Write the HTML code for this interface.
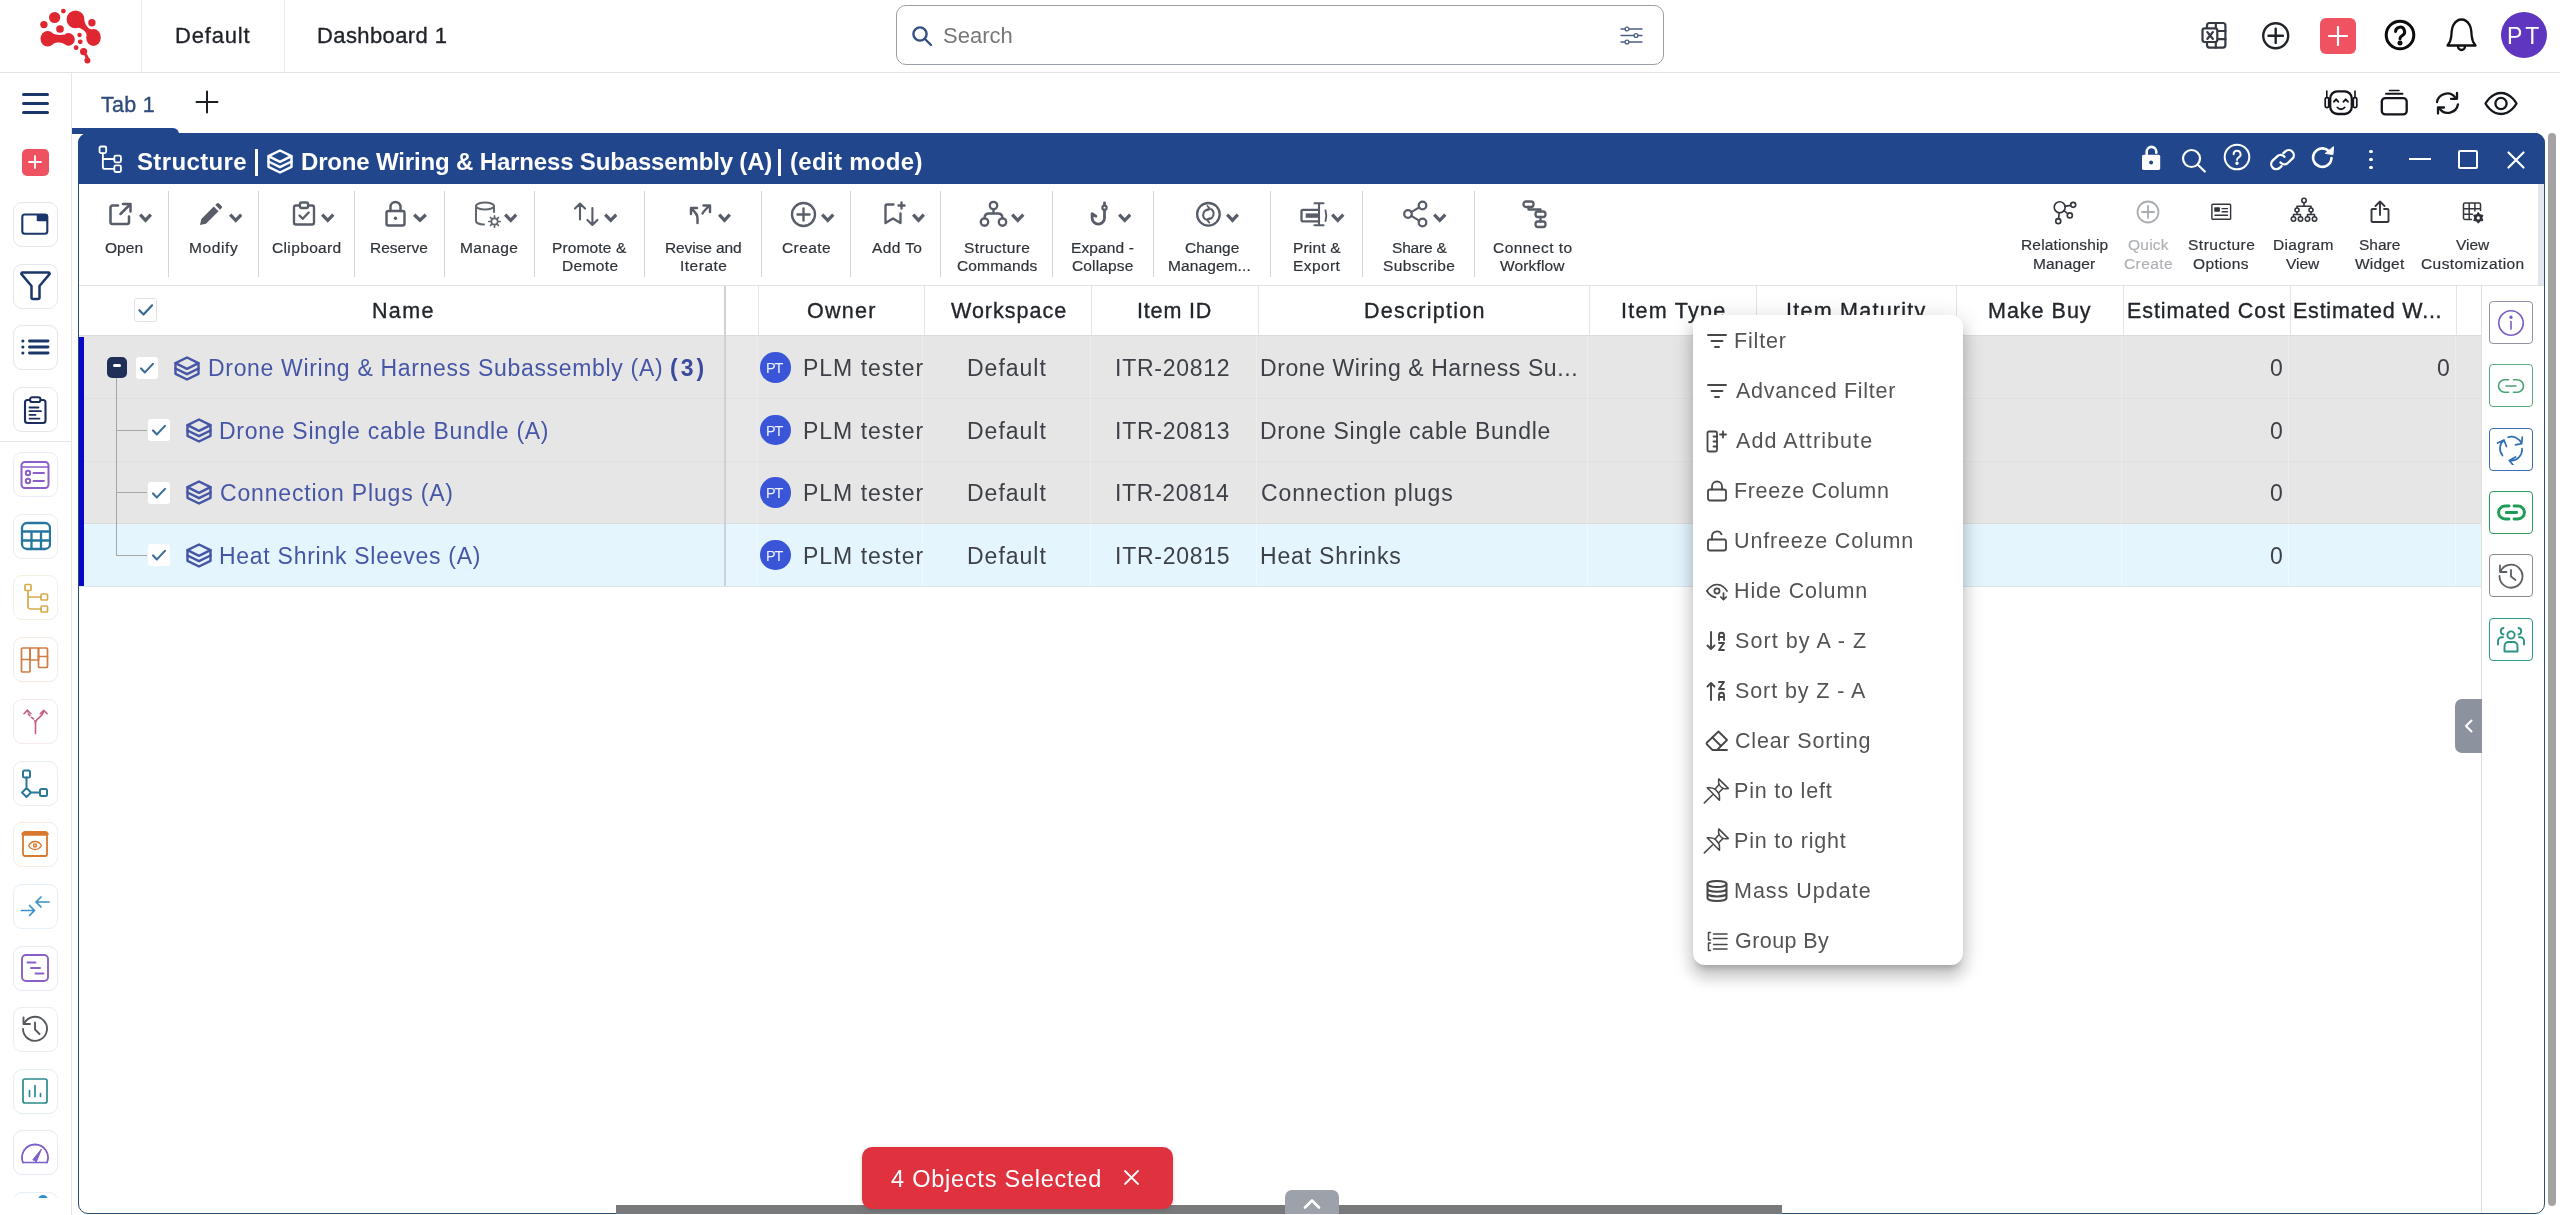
<!DOCTYPE html>
<html lang="en"><head><meta charset="utf-8"><title>Structure - Drone Wiring &amp; Harness Subassembly</title><style>
*{margin:0;padding:0;box-sizing:border-box}
html,body{width:2560px;height:1215px;overflow:hidden;background:#fff}
body{position:relative;font-family:"Liberation Sans", sans-serif;}
div,svg,span.t{position:absolute}
span.t{white-space:nowrap;display:block;will-change:transform}
</style></head>
<body>
<div style="left:0px;top:72px;width:2560px;height:1px;background:#e3e3e3"></div>
<div style="left:141px;top:0px;width:1px;height:72px;background:#ececec"></div>
<div style="left:284px;top:0px;width:1px;height:72px;background:#ececec"></div>
<span class="t" style="left:175.00px;top:24.8px;font-size:22px;line-height:22px;color:#1f2328;-webkit-text-stroke:0.35px;letter-spacing:0.817px;">Default</span>
<span class="t" style="left:317.00px;top:24.8px;font-size:22px;line-height:22px;color:#1f2328;-webkit-text-stroke:0.35px;letter-spacing:0.400px;">Dashboard 1</span>
<div style="left:896px;top:5px;width:768px;height:60px;border:1px solid #9aa0a8;border-radius:10px;background:#fff"></div>
<span class="t" style="left:943.00px;top:24.8px;font-size:22px;line-height:22px;color:#777;letter-spacing:0.000px;">Search</span>
<div style="left:71px;top:73px;width:1px;height:1142px;background:#e6e6e6"></div>
<div style="left:0px;top:441px;width:71px;height:1px;background:#e6e6e6"></div>
<div style="left:21.5px;top:92.8px;width:27.5px;height:3.4px;background:#1b3769;border-radius:1.700px"></div>
<div style="left:21.5px;top:101.8px;width:27.5px;height:3.4px;background:#1b3769;border-radius:1.700px"></div>
<div style="left:21.5px;top:110.8px;width:27.5px;height:3.4px;background:#1b3769;border-radius:1.700px"></div>
<span class="t" style="left:101.00px;top:95.0px;font-size:21.5px;line-height:21.5px;color:#2f4a7c;-webkit-text-stroke:0.35px;letter-spacing:0.250px;">Tab 1</span>
<div style="left:72px;top:128px;width:107px;height:6px;background:#21468b;border-radius:0 6px 0 0"></div>
<div style="left:78px;top:133px;width:2467px;height:1081px;border:1px solid #2c4e6e;border-radius:10px 10px 10px 10px;background:#fff"></div>
<div style="left:78px;top:133px;width:2467px;height:51px;background:#21468b;border-radius:10px 10px 0 0"></div>
<span class="t" style="left:137.00px;top:149.9px;font-size:24px;line-height:24px;color:#fff;font-weight:700;letter-spacing:0.362px;">Structure</span>
<div style="left:255px;top:149px;width:3px;height:27px;background:#fff"></div>
<span class="t" style="left:300.50px;top:149.9px;font-size:24px;line-height:24px;color:#fff;font-weight:700;letter-spacing:-0.159px;">Drone Wiring &amp; Harness Subassembly (A)</span>
<div style="left:778px;top:149px;width:3px;height:27px;background:#fff"></div>
<span class="t" style="left:790.00px;top:149.9px;font-size:24px;line-height:24px;color:#fff;font-weight:700;letter-spacing:0.310px;">(edit mode)</span>
<div style="left:168px;top:191px;width:1px;height:86px;background:#d3d5d7"></div>
<div style="left:258px;top:191px;width:1px;height:86px;background:#d3d5d7"></div>
<div style="left:354px;top:191px;width:1px;height:86px;background:#d3d5d7"></div>
<div style="left:444px;top:191px;width:1px;height:86px;background:#d3d5d7"></div>
<div style="left:534px;top:191px;width:1px;height:86px;background:#d3d5d7"></div>
<div style="left:644px;top:191px;width:1px;height:86px;background:#d3d5d7"></div>
<div style="left:761px;top:191px;width:1px;height:86px;background:#d3d5d7"></div>
<div style="left:850px;top:191px;width:1px;height:86px;background:#d3d5d7"></div>
<div style="left:940px;top:191px;width:1px;height:86px;background:#d3d5d7"></div>
<div style="left:1052px;top:191px;width:1px;height:86px;background:#d3d5d7"></div>
<div style="left:1153px;top:191px;width:1px;height:86px;background:#d3d5d7"></div>
<div style="left:1270px;top:191px;width:1px;height:86px;background:#d3d5d7"></div>
<div style="left:1362px;top:191px;width:1px;height:86px;background:#d3d5d7"></div>
<div style="left:1474px;top:191px;width:1px;height:86px;background:#d3d5d7"></div>
<div style="left:79px;top:285px;width:2465px;height:1px;background:#e2e2e2"></div>
<div style="left:2538px;top:184px;width:6px;height:101px;background:#e3e7ee"></div>
<span class="t" style="left:105.00px;top:240.4px;font-size:15.5px;line-height:15.5px;color:#2e3338;-webkit-text-stroke:0.2px;letter-spacing:0.033px;">Open</span>
<span class="t" style="left:189.00px;top:240.4px;font-size:15.5px;line-height:15.5px;color:#2e3338;-webkit-text-stroke:0.2px;letter-spacing:0.600px;">Modify</span>
<span class="t" style="left:272.00px;top:240.4px;font-size:15.5px;line-height:15.5px;color:#2e3338;-webkit-text-stroke:0.2px;letter-spacing:0.362px;">Clipboard</span>
<span class="t" style="left:370.00px;top:240.4px;font-size:15.5px;line-height:15.5px;color:#2e3338;-webkit-text-stroke:0.2px;letter-spacing:0.017px;">Reserve</span>
<span class="t" style="left:460.00px;top:240.4px;font-size:15.5px;line-height:15.5px;color:#2e3338;-webkit-text-stroke:0.2px;letter-spacing:0.380px;">Manage</span>
<span class="t" style="left:552.00px;top:240.4px;font-size:15.5px;line-height:15.5px;color:#2e3338;-webkit-text-stroke:0.2px;letter-spacing:0.125px;">Promote &amp;</span>
<span class="t" style="left:561.50px;top:258.1px;font-size:15.5px;line-height:15.5px;color:#2e3338;-webkit-text-stroke:0.2px;letter-spacing:0.380px;">Demote</span>
<span class="t" style="left:665.00px;top:240.4px;font-size:15.5px;line-height:15.5px;color:#2e3338;-webkit-text-stroke:0.2px;letter-spacing:-0.111px;">Revise and</span>
<span class="t" style="left:680.00px;top:258.1px;font-size:15.5px;line-height:15.5px;color:#2e3338;-webkit-text-stroke:0.2px;letter-spacing:0.500px;">Iterate</span>
<span class="t" style="left:782.00px;top:240.4px;font-size:15.5px;line-height:15.5px;color:#2e3338;-webkit-text-stroke:0.2px;letter-spacing:0.400px;">Create</span>
<span class="t" style="left:872.00px;top:240.4px;font-size:15.5px;line-height:15.5px;color:#2e3338;-webkit-text-stroke:0.2px;letter-spacing:0.400px;">Add To</span>
<span class="t" style="left:964.00px;top:240.4px;font-size:15.5px;line-height:15.5px;color:#2e3338;-webkit-text-stroke:0.2px;letter-spacing:0.375px;">Structure</span>
<span class="t" style="left:956.50px;top:258.1px;font-size:15.5px;line-height:15.5px;color:#2e3338;-webkit-text-stroke:0.2px;letter-spacing:0.143px;">Commands</span>
<span class="t" style="left:1071.00px;top:240.4px;font-size:15.5px;line-height:15.5px;color:#2e3338;-webkit-text-stroke:0.2px;letter-spacing:0.129px;">Expand -</span>
<span class="t" style="left:1072.00px;top:258.1px;font-size:15.5px;line-height:15.5px;color:#2e3338;-webkit-text-stroke:0.2px;letter-spacing:0.143px;">Collapse</span>
<span class="t" style="left:1184.50px;top:240.4px;font-size:15.5px;line-height:15.5px;color:#2e3338;-webkit-text-stroke:0.2px;letter-spacing:0.000px;">Change</span>
<span class="t" style="left:1168.00px;top:258.1px;font-size:15.5px;line-height:15.5px;color:#2e3338;-webkit-text-stroke:0.2px;letter-spacing:0.100px;">Managem...</span>
<span class="t" style="left:1293.00px;top:240.4px;font-size:15.5px;line-height:15.5px;color:#2e3338;-webkit-text-stroke:0.2px;letter-spacing:0.167px;">Print &amp;</span>
<span class="t" style="left:1293.00px;top:258.1px;font-size:15.5px;line-height:15.5px;color:#2e3338;-webkit-text-stroke:0.2px;letter-spacing:0.400px;">Export</span>
<span class="t" style="left:1391.50px;top:240.4px;font-size:15.5px;line-height:15.5px;color:#2e3338;-webkit-text-stroke:0.2px;letter-spacing:-0.183px;">Share &amp;</span>
<span class="t" style="left:1383.00px;top:258.1px;font-size:15.5px;line-height:15.5px;color:#2e3338;-webkit-text-stroke:0.2px;letter-spacing:0.375px;">Subscribe</span>
<span class="t" style="left:1493.00px;top:240.4px;font-size:15.5px;line-height:15.5px;color:#2e3338;-webkit-text-stroke:0.2px;letter-spacing:0.456px;">Connect to</span>
<span class="t" style="left:1500.00px;top:258.1px;font-size:15.5px;line-height:15.5px;color:#2e3338;-webkit-text-stroke:0.2px;letter-spacing:0.143px;">Workflow</span>
<span class="t" style="left:2020.50px;top:237.4px;font-size:15.5px;line-height:15.5px;color:#2e3338;-webkit-text-stroke:0.2px;letter-spacing:0.173px;">Relationship</span>
<span class="t" style="left:2032.50px;top:256.2px;font-size:15.5px;line-height:15.5px;color:#2e3338;-webkit-text-stroke:0.2px;letter-spacing:0.167px;">Manager</span>
<span class="t" style="left:2127.50px;top:237.4px;font-size:15.5px;line-height:15.5px;color:#aeb1b5;-webkit-text-stroke:0.2px;letter-spacing:0.250px;">Quick</span>
<span class="t" style="left:2123.50px;top:256.2px;font-size:15.5px;line-height:15.5px;color:#aeb1b5;-webkit-text-stroke:0.2px;letter-spacing:0.400px;">Create</span>
<span class="t" style="left:2188.00px;top:237.4px;font-size:15.5px;line-height:15.5px;color:#2e3338;-webkit-text-stroke:0.2px;letter-spacing:0.500px;">Structure</span>
<span class="t" style="left:2193.00px;top:256.2px;font-size:15.5px;line-height:15.5px;color:#2e3338;-webkit-text-stroke:0.2px;letter-spacing:0.350px;">Options</span>
<span class="t" style="left:2272.50px;top:237.4px;font-size:15.5px;line-height:15.5px;color:#2e3338;-webkit-text-stroke:0.2px;letter-spacing:0.317px;">Diagram</span>
<span class="t" style="left:2286.00px;top:256.2px;font-size:15.5px;line-height:15.5px;color:#2e3338;-webkit-text-stroke:0.2px;letter-spacing:0.000px;">View</span>
<span class="t" style="left:2358.50px;top:237.4px;font-size:15.5px;line-height:15.5px;color:#2e3338;-webkit-text-stroke:0.2px;letter-spacing:0.000px;">Share</span>
<span class="t" style="left:2355.00px;top:256.2px;font-size:15.5px;line-height:15.5px;color:#2e3338;-webkit-text-stroke:0.2px;letter-spacing:0.200px;">Widget</span>
<span class="t" style="left:2455.50px;top:237.4px;font-size:15.5px;line-height:15.5px;color:#2e3338;-webkit-text-stroke:0.2px;letter-spacing:0.000px;">View</span>
<span class="t" style="left:2421.00px;top:256.2px;font-size:15.5px;line-height:15.5px;color:#2e3338;-webkit-text-stroke:0.2px;letter-spacing:0.417px;">Customization</span>
<div style="left:79px;top:336px;width:2402px;height:187.5px;background:#e6e6e6"></div>
<div style="left:79px;top:523.5px;width:2402px;height:62.5px;background:#e5f5fe"></div>
<div style="left:79px;top:335px;width:2402px;height:1px;background:#dcdcdc"></div>
<div style="left:84px;top:398.0px;width:2397px;height:1px;background:#e0e0e0"></div>
<div style="left:84px;top:460.5px;width:2397px;height:1px;background:#e0e0e0"></div>
<div style="left:84px;top:522.5px;width:2397px;height:1.5px;background:#dadddf"></div>
<div style="left:79px;top:585.5px;width:2402px;height:1px;background:#dbe6ec"></div>
<div style="left:758.0px;top:286px;width:1px;height:49px;background:#e4e4e4"></div>
<div style="left:756.8px;top:336px;width:1px;height:187px;background:#ececec"></div>
<div style="left:756.8px;top:524px;width:1px;height:62px;background:#eff9fe"></div>
<div style="left:923.5px;top:286px;width:1px;height:49px;background:#e4e4e4"></div>
<div style="left:922.3px;top:336px;width:1px;height:187px;background:#ececec"></div>
<div style="left:922.3px;top:524px;width:1px;height:62px;background:#eff9fe"></div>
<div style="left:1091.0px;top:286px;width:1px;height:49px;background:#e4e4e4"></div>
<div style="left:1089.8px;top:336px;width:1px;height:187px;background:#ececec"></div>
<div style="left:1089.8px;top:524px;width:1px;height:62px;background:#eff9fe"></div>
<div style="left:1257.5px;top:286px;width:1px;height:49px;background:#e4e4e4"></div>
<div style="left:1256.3px;top:336px;width:1px;height:187px;background:#ececec"></div>
<div style="left:1256.3px;top:524px;width:1px;height:62px;background:#eff9fe"></div>
<div style="left:1588.5px;top:286px;width:1px;height:49px;background:#e4e4e4"></div>
<div style="left:1587.3px;top:336px;width:1px;height:187px;background:#ececec"></div>
<div style="left:1587.3px;top:524px;width:1px;height:62px;background:#eff9fe"></div>
<div style="left:1756.0px;top:286px;width:1px;height:49px;background:#e4e4e4"></div>
<div style="left:1754.8px;top:336px;width:1px;height:187px;background:#ececec"></div>
<div style="left:1754.8px;top:524px;width:1px;height:62px;background:#eff9fe"></div>
<div style="left:1956.0px;top:286px;width:1px;height:49px;background:#e4e4e4"></div>
<div style="left:1954.8px;top:336px;width:1px;height:187px;background:#ececec"></div>
<div style="left:1954.8px;top:524px;width:1px;height:62px;background:#eff9fe"></div>
<div style="left:2122.5px;top:286px;width:1px;height:49px;background:#e4e4e4"></div>
<div style="left:2121.3px;top:336px;width:1px;height:187px;background:#ececec"></div>
<div style="left:2121.3px;top:524px;width:1px;height:62px;background:#eff9fe"></div>
<div style="left:2289.5px;top:286px;width:1px;height:49px;background:#e4e4e4"></div>
<div style="left:2288.3px;top:336px;width:1px;height:187px;background:#ececec"></div>
<div style="left:2288.3px;top:524px;width:1px;height:62px;background:#eff9fe"></div>
<div style="left:2456.0px;top:286px;width:1px;height:49px;background:#e4e4e4"></div>
<div style="left:2454.8px;top:336px;width:1px;height:187px;background:#ececec"></div>
<div style="left:2454.8px;top:524px;width:1px;height:62px;background:#eff9fe"></div>
<div style="left:723.5px;top:286px;width:2.5px;height:300px;background:#cfd1d4"></div>
<div style="left:727px;top:336px;width:31px;height:250px;background:rgba(255,255,255,0.08)"></div>
<div style="left:79px;top:337px;width:5px;height:249px;background:#0707c9"></div>
<div style="left:2481px;top:286px;width:1px;height:927px;background:#e0e0e0"></div>
<span class="t" style="left:372.00px;top:300.7px;font-size:21.5px;line-height:21.5px;color:#22262b;-webkit-text-stroke:0.35px;letter-spacing:1.333px;">Name</span>
<span class="t" style="left:807.00px;top:300.7px;font-size:21.5px;line-height:21.5px;color:#22262b;-webkit-text-stroke:0.35px;letter-spacing:1.250px;">Owner</span>
<span class="t" style="left:951.00px;top:300.7px;font-size:21.5px;line-height:21.5px;color:#22262b;-webkit-text-stroke:0.35px;letter-spacing:1.000px;">Workspace</span>
<span class="t" style="left:1137.00px;top:300.7px;font-size:21.5px;line-height:21.5px;color:#22262b;-webkit-text-stroke:0.35px;letter-spacing:0.833px;">Item ID</span>
<span class="t" style="left:1363.50px;top:300.7px;font-size:21.5px;line-height:21.5px;color:#22262b;-webkit-text-stroke:0.35px;letter-spacing:1.300px;">Description</span>
<span class="t" style="left:1620.50px;top:300.7px;font-size:21.5px;line-height:21.5px;color:#22262b;-webkit-text-stroke:0.35px;letter-spacing:1.262px;">Item Type</span>
<span class="t" style="left:1786.00px;top:300.7px;font-size:21.5px;line-height:21.5px;color:#22262b;-webkit-text-stroke:0.35px;letter-spacing:1.250px;">Item Maturity</span>
<span class="t" style="left:1988.00px;top:300.7px;font-size:21.5px;line-height:21.5px;color:#22262b;-webkit-text-stroke:0.35px;letter-spacing:1.000px;">Make Buy</span>
<span class="t" style="left:2126.50px;top:300.7px;font-size:21.5px;line-height:21.5px;color:#22262b;-webkit-text-stroke:0.35px;letter-spacing:0.923px;">Estimated Cost</span>
<span class="t" style="left:2292.50px;top:300.7px;font-size:21.5px;line-height:21.5px;color:#22262b;-webkit-text-stroke:0.35px;letter-spacing:0.769px;">Estimated W...</span>
<span class="t" style="left:207.50px;top:357.0px;font-size:23px;line-height:23px;color:#4656a6;letter-spacing:0.678px;">Drone Wiring &amp; Harness Subassembly (A)</span>
<span class="t" style="left:670.00px;top:357.0px;font-size:23px;line-height:23px;color:#3a4a9c;font-weight:700;letter-spacing:3.000px;">(3)</span>
<div style="left:760px;top:352.4px;width:30.5px;height:30.5px;background:#3b55d8;border-radius:50%"></div>
<span class="t" style="left:766.00px;top:361.3px;font-size:14.5px;line-height:14.5px;color:#eef1ff;letter-spacing:-1.260px;">PT</span>
<span class="t" style="left:803.00px;top:357.0px;font-size:23px;line-height:23px;color:#3d4147;letter-spacing:0.989px;">PLM tester</span>
<span class="t" style="left:966.50px;top:357.0px;font-size:23px;line-height:23px;color:#3d4147;letter-spacing:1.000px;">Default</span>
<span class="t" style="left:1115.00px;top:357.0px;font-size:23px;line-height:23px;color:#3d4147;letter-spacing:0.738px;">ITR-20812</span>
<span class="t" style="left:1259.50px;top:357.0px;font-size:23px;line-height:23px;color:#3d4147;letter-spacing:0.589px;">Drone Wiring &amp; Harness Su...</span>
<span class="t" style="left:2270.00px;top:357.0px;font-size:23px;line-height:23px;color:#3d4147;letter-spacing:2.700px;">0</span>
<span class="t" style="left:2437.00px;top:357.0px;font-size:23px;line-height:23px;color:#3d4147;letter-spacing:2.700px;">0</span>
<span class="t" style="left:219.00px;top:419.5px;font-size:23px;line-height:23px;color:#4656a6;letter-spacing:0.718px;">Drone Single cable Bundle (A)</span>
<div style="left:760px;top:414.9px;width:30.5px;height:30.5px;background:#3b55d8;border-radius:50%"></div>
<span class="t" style="left:766.00px;top:423.8px;font-size:14.5px;line-height:14.5px;color:#eef1ff;letter-spacing:-1.260px;">PT</span>
<span class="t" style="left:803.00px;top:419.5px;font-size:23px;line-height:23px;color:#3d4147;letter-spacing:0.989px;">PLM tester</span>
<span class="t" style="left:966.50px;top:419.5px;font-size:23px;line-height:23px;color:#3d4147;letter-spacing:1.000px;">Default</span>
<span class="t" style="left:1115.00px;top:419.5px;font-size:23px;line-height:23px;color:#3d4147;letter-spacing:0.738px;">ITR-20813</span>
<span class="t" style="left:1259.50px;top:419.5px;font-size:23px;line-height:23px;color:#3d4147;letter-spacing:0.750px;">Drone Single cable Bundle</span>
<span class="t" style="left:2270.00px;top:419.5px;font-size:23px;line-height:23px;color:#3d4147;letter-spacing:2.700px;">0</span>
<span class="t" style="left:220.00px;top:482.0px;font-size:23px;line-height:23px;color:#4656a6;letter-spacing:0.823px;">Connection Plugs (A)</span>
<div style="left:760px;top:477.4px;width:30.5px;height:30.5px;background:#3b55d8;border-radius:50%"></div>
<span class="t" style="left:766.00px;top:486.3px;font-size:14.5px;line-height:14.5px;color:#eef1ff;letter-spacing:-1.260px;">PT</span>
<span class="t" style="left:803.00px;top:482.0px;font-size:23px;line-height:23px;color:#3d4147;letter-spacing:0.989px;">PLM tester</span>
<span class="t" style="left:966.50px;top:482.0px;font-size:23px;line-height:23px;color:#3d4147;letter-spacing:1.000px;">Default</span>
<span class="t" style="left:1115.00px;top:482.0px;font-size:23px;line-height:23px;color:#3d4147;letter-spacing:0.637px;">ITR-20814</span>
<span class="t" style="left:1260.50px;top:482.0px;font-size:23px;line-height:23px;color:#3d4147;letter-spacing:0.940px;">Connection plugs</span>
<span class="t" style="left:2270.00px;top:482.0px;font-size:23px;line-height:23px;color:#3d4147;letter-spacing:2.700px;">0</span>
<span class="t" style="left:219.00px;top:544.5px;font-size:23px;line-height:23px;color:#4656a6;letter-spacing:0.727px;">Heat Shrink Sleeves (A)</span>
<div style="left:760px;top:539.9000000000001px;width:30.5px;height:30.5px;background:#3b55d8;border-radius:50%"></div>
<span class="t" style="left:766.00px;top:548.8px;font-size:14.5px;line-height:14.5px;color:#eef1ff;letter-spacing:-1.260px;">PT</span>
<span class="t" style="left:803.00px;top:544.5px;font-size:23px;line-height:23px;color:#3d4147;letter-spacing:0.989px;">PLM tester</span>
<span class="t" style="left:966.50px;top:544.5px;font-size:23px;line-height:23px;color:#3d4147;letter-spacing:1.000px;">Default</span>
<span class="t" style="left:1115.00px;top:544.5px;font-size:23px;line-height:23px;color:#3d4147;letter-spacing:0.738px;">ITR-20815</span>
<span class="t" style="left:1259.50px;top:544.5px;font-size:23px;line-height:23px;color:#3d4147;letter-spacing:0.827px;">Heat Shrinks</span>
<span class="t" style="left:2270.00px;top:544.5px;font-size:23px;line-height:23px;color:#3d4147;letter-spacing:2.700px;">0</span>
<div style="left:115.6px;top:377px;width:1.3px;height:178.5px;background:#a6a6a6"></div>
<div style="left:116px;top:429.5px;width:31px;height:1.3px;background:#a6a6a6"></div>
<div style="left:116px;top:492.0px;width:31px;height:1.3px;background:#a6a6a6"></div>
<div style="left:116px;top:554.5px;width:31px;height:1.3px;background:#a6a6a6"></div>
<div style="left:133.5px;top:298px;width:23.5px;height:23.5px;background:#fff;border-radius:3px;border:1px solid #e2e2e2;"></div>
<svg style="left:133.5px;top:298px" width="23.5" height="23.5" viewBox="0 0 24 24" fill="none" stroke="#3a6c98" stroke-width="2.3" stroke-linecap="round" stroke-linejoin="round" ><path d="M5.5 12.5l4.2 4.3 8.8-9.3" /></svg>
<div style="left:136px;top:356.5px;width:22px;height:22px;background:#fff;border-radius:3px;"></div>
<svg style="left:136px;top:356.5px" width="22" height="22" viewBox="0 0 24 24" fill="none" stroke="#3a6c98" stroke-width="2.3" stroke-linecap="round" stroke-linejoin="round" ><path d="M5.5 12.5l4.2 4.3 8.8-9.3" /></svg>
<div style="left:147.7px;top:419.2px;width:22px;height:22px;background:#fff;border-radius:3px;"></div>
<svg style="left:147.7px;top:419.2px" width="22" height="22" viewBox="0 0 24 24" fill="none" stroke="#3a6c98" stroke-width="2.3" stroke-linecap="round" stroke-linejoin="round" ><path d="M5.5 12.5l4.2 4.3 8.8-9.3" /></svg>
<div style="left:147.7px;top:481.7px;width:22px;height:22px;background:#fff;border-radius:3px;"></div>
<svg style="left:147.7px;top:481.7px" width="22" height="22" viewBox="0 0 24 24" fill="none" stroke="#3a6c98" stroke-width="2.3" stroke-linecap="round" stroke-linejoin="round" ><path d="M5.5 12.5l4.2 4.3 8.8-9.3" /></svg>
<div style="left:147.7px;top:544.2px;width:22px;height:22px;background:#fff;border-radius:3px;"></div>
<svg style="left:147.7px;top:544.2px" width="22" height="22" viewBox="0 0 24 24" fill="none" stroke="#3a6c98" stroke-width="2.3" stroke-linecap="round" stroke-linejoin="round" ><path d="M5.5 12.5l4.2 4.3 8.8-9.3" /></svg>
<div style="left:106.5px;top:357px;width:20.5px;height:20.5px;background:#1f2f58;border-radius:5px"></div>
<div style="left:112.5px;top:364.3px;width:8.5px;height:3px;background:#fff;border-radius:1.5px"></div>
<svg style="left:174px;top:355.5px" width="26" height="25" viewBox="0 0 26 25" fill="none" stroke="#4656a6" stroke-width="2.4" stroke-linecap="round" stroke-linejoin="round" ><path d="M13 1.500 1.500 7.200l11.500 5.700L24.500 7.200z"/><path d="M1.500 7.200v5.300l11.500 5.700L24.500 12.500V7.200"/><path d="M1.500 12.500v5.300l11.500 5.700L24.500 17.800v-5.300"/></svg>
<svg style="left:186px;top:417.5px" width="26" height="25" viewBox="0 0 26 25" fill="none" stroke="#4656a6" stroke-width="2.4" stroke-linecap="round" stroke-linejoin="round" ><path d="M13 1.500 1.500 7.200l11.500 5.700L24.500 7.200z"/><path d="M1.500 7.200v5.300l11.500 5.700L24.500 12.500V7.200"/><path d="M1.500 12.500v5.300l11.500 5.700L24.500 17.800v-5.300"/></svg>
<svg style="left:186px;top:480.0px" width="26" height="25" viewBox="0 0 26 25" fill="none" stroke="#4656a6" stroke-width="2.4" stroke-linecap="round" stroke-linejoin="round" ><path d="M13 1.500 1.500 7.200l11.500 5.700L24.500 7.200z"/><path d="M1.500 7.200v5.300l11.500 5.700L24.500 12.500V7.200"/><path d="M1.500 12.500v5.300l11.500 5.700L24.500 17.800v-5.300"/></svg>
<svg style="left:186px;top:542.5px" width="26" height="25" viewBox="0 0 26 25" fill="none" stroke="#4656a6" stroke-width="2.4" stroke-linecap="round" stroke-linejoin="round" ><path d="M13 1.500 1.500 7.200l11.500 5.700L24.500 7.200z"/><path d="M1.500 7.200v5.300l11.500 5.700L24.500 12.500V7.200"/><path d="M1.500 12.500v5.300l11.500 5.700L24.500 17.800v-5.300"/></svg>
<div style="left:2454.5px;top:699px;width:27px;height:53.5px;background:#8c929e;border-radius:7px 0 0 7px"></div>
<svg style="left:2458.5px;top:715px" width="20" height="22" viewBox="0 0 20 22" fill="none" stroke="#fff" stroke-width="2" stroke-linecap="round" stroke-linejoin="round" ><path d="M12.5 5.5 7 11l5.5 5.5"/></svg>
<div style="left:2548px;top:133px;width:8px;height:1073px;background:#a5a3a2;border-radius:4px"></div>
<div style="left:616px;top:1205px;width:1165.5px;height:8.5px;background:#77797b"></div>
<div style="left:1285px;top:1190px;width:53.5px;height:24px;background:#9da1a9;border-radius:7px 7px 0 0"></div>
<svg style="left:1300px;top:1194px" width="24" height="18" viewBox="0 0 24 18" fill="none" stroke="#fff" stroke-width="2.6" stroke-linecap="round" stroke-linejoin="round" ><path d="M5 13.5l7-7 7 7"/></svg>
<div style="left:862px;top:1147px;width:310.5px;height:62px;background:#e0313f;border-radius:10px;box-shadow:0 1px 4px rgba(0,0,0,.15)"></div>
<span class="t" style="left:891.00px;top:1167.8px;font-size:23.5px;line-height:23.5px;color:#fff;letter-spacing:0.765px;">4 Objects Selected</span>
<svg style="left:1122.5px;top:1169px" width="17" height="17" viewBox="0 0 17 17" fill="none" stroke="#fff" stroke-width="1.8" stroke-linecap="round" stroke-linejoin="round" ><path d="M2 2l13 13M15 2 2 15"/></svg>
<svg style="left:30px;top:0px" width="80" height="72" viewBox="30 0 80 72" fill="#de2731" stroke="none" stroke-width="0" stroke-linecap="round" stroke-linejoin="round" ><circle cx="63.4" cy="11.1" r="2.4"/><circle cx="54.6" cy="17.5" r="5.6"/><circle cx="43.9" cy="24.6" r="3.7"/><circle cx="60" cy="29" r="3.85"/><circle cx="91.9" cy="22.8" r="3.7"/><circle cx="79.5" cy="35" r="2.2"/><circle cx="80.25" cy="41.8" r="2.4"/><circle cx="76.1" cy="47.7" r="2.4"/><circle cx="83.6" cy="51.6" r="3.6"/><circle cx="87.4" cy="60.4" r="3.0"/><circle cx="75.5" cy="19.4" r="8.9"/><circle cx="68.5" cy="39.4" r="6.3"/><ellipse cx="93.5" cy="37.5" rx="7.3" ry="8.4"/><ellipse cx="47.7" cy="38.7" rx="7.2" ry="7.8"/><path d="M78.500 27.800C83 29 86 31.500 86.700 35L91.500 29.600C88 28.500 85.500 25.500 84.300 20.500z"/><path d="M52 33.500C56 35 60 35.500 64 34.500L64.500 44C60 42 56 42 52.500 44.500z"/><path d="M84.200 55l2.600-1.200 2 4-2.800 1.200z"/></svg>
<svg style="left:910px;top:24px" width="24" height="24" viewBox="0 0 24 24" fill="none" stroke="#35507f" stroke-width="2.4" stroke-linecap="round" stroke-linejoin="round" ><circle cx="10" cy="10" r="6.6"/><path d="M15 15l6 6"/></svg>
<svg style="left:1619.5px;top:23.5px" width="23" height="23" viewBox="0 0 23 23" fill="none" stroke="#4b5f86" stroke-width="1.3" stroke-linecap="round" stroke-linejoin="round" ><path d="M1 5h21M1 11.5h21M1 18h21"/><circle cx="7" cy="5" r="1.9" fill="#fff"/><circle cx="16" cy="11.5" r="1.9" fill="#fff"/><circle cx="7" cy="18" r="1.9" fill="#fff"/></svg>
<svg style="left:2195px;top:15px" width="40" height="40" viewBox="2195 15 40 40" fill="none" stroke="#353a42" stroke-width="2.2" stroke-linecap="round" stroke-linejoin="round" ><rect x="2207" y="23" width="18.400" height="24.600" rx="2.500"/><path d="M2215.800 23v24.600M2215.800 31h9.600M2215.800 39.200h9.600"/><rect x="2202.500" y="28.300" width="14.800" height="13.700" rx="2.200" fill="#fff"/><path d="M2207.300 32l5.600 7M2212.900 32l-5.600 7" stroke-width="2.100"/></svg>
<svg style="left:2260.5px;top:20.5px" width="29" height="29" viewBox="0 0 29 29" fill="none" stroke="#20242a" stroke-width="2.4" stroke-linecap="round" stroke-linejoin="round" ><circle cx="14.700" cy="14.750" r="12.500"/><path d="M14.700 7.600v14.300M7.500 14.750h14.400"/></svg>
<div style="left:2320px;top:17.5px;width:36px;height:36px;background:#ef5260;border-radius:6px"></div>
<svg style="left:2328px;top:25.5px" width="20" height="20" viewBox="0 0 20 20" fill="none" stroke="#fff" stroke-width="2.2" stroke-linecap="round" stroke-linejoin="round" ><path d="M10 1v18M1 10h18"/></svg>
<svg style="left:2383.5px;top:19px" width="32" height="32" viewBox="0 0 32 32" fill="none" stroke="#0c0c0c" stroke-width="3" stroke-linecap="round" stroke-linejoin="round" ><circle cx="16" cy="16" r="13.8"/><path d="M11.6 12.6a4.5 4.5 0 1 1 6.6 4c-1.5.8-2.2 1.6-2.2 3.2"/><circle cx="16" cy="24" r="1" fill="#0c0c0c"/></svg>
<svg style="left:2445px;top:17px" width="33" height="36" viewBox="0 0 33 36" fill="none" stroke="#101214" stroke-width="2.3" stroke-linecap="round" stroke-linejoin="round" ><path d="M2.5 28.5c2.2-2.6 3.4-4.8 3.8-9.5.4-5 .3-8 2.2-11.2C10.3 4.7 13 2.5 16.5 2.5s6.2 2.200 8 5.300c1.900 3.200 1.800 6.200 2.200 11.200.4 4.700 1.600 6.900 3.800 9.500z"/><path d="M13 29.500a3.500 3.500 0 0 0 7 0"/></svg>
<div style="left:2500.5px;top:12px;width:46px;height:46px;background:#5f36c0;border-radius:50%"></div>
<span class="t" style="left:2506.50px;top:24.6px;font-size:23px;line-height:23px;color:#fff;letter-spacing:2.900px;">PT</span>
<svg style="left:195px;top:90px" width="24" height="24" viewBox="0 0 24 24" fill="none" stroke="#1a1d21" stroke-width="2" stroke-linecap="round" stroke-linejoin="round" ><path d="M12 1.500v21M1.500 12h21"/></svg>
<svg style="left:2315px;top:82px" width="110" height="40" viewBox="2315 82 110 40" fill="none" stroke="#14141c" stroke-width="2.3" stroke-linecap="round" stroke-linejoin="round" ><rect x="2330.200" y="91.300" width="21.600" height="22.700" rx="7.300"/><rect x="2325.200" y="97.600" width="3.500" height="10" rx="1.500" stroke-width="1.700"/><rect x="2353.300" y="97.600" width="3.500" height="10" rx="1.500" stroke-width="1.700"/><path d="M2326.800 91v6M2355 91v6" stroke-width="1.600"/><path d="M2334 101.700l2.100-2.400 2.100 2.400M2343.500 101.700l2.200-2.400 2.200 2.400M2337.400 107.500c2 2.300 5.200 2.300 7.200 0" stroke-width="1.900"/><rect x="2381.800" y="98.100" width="24.900" height="16.300" rx="3.500"/><path d="M2386 93.800h16.500" stroke-width="1.900"/><path d="M2389.500 90.600h9.500" stroke-width="1.500"/></svg>
<svg style="left:2433.5px;top:90.5px" width="27" height="26" viewBox="0 0 27 26" fill="none" stroke="#14171b" stroke-width="2.3" stroke-linecap="round" stroke-linejoin="round" ><path d="M3 11A10.300 10.300 0 0 1 21.500 6.800"/><path d="M23 1.800v6H17"/><path d="M24 13.300A10.300 10.300 0 0 1 5.500 17.500"/><path d="M4 22.500v-6H10"/></svg>
<svg style="left:2484px;top:90.5px" width="34" height="25" viewBox="0 0 34 25" fill="none" stroke="#14171b" stroke-width="2.3" stroke-linecap="round" stroke-linejoin="round" ><path d="M1.500 12.500S7 2 17 2s15.500 10.500 15.500 10.500S27 23 17 23 1.500 12.500 1.500 12.500z"/><circle cx="17" cy="12.500" r="5.600"/></svg>
<svg style="left:98px;top:144.5px" width="24.5" height="29" viewBox="0 0 24 28.500" fill="none" stroke="#fff" stroke-width="1.8" stroke-linecap="round" stroke-linejoin="round" ><rect x="1.500" y="1.500" width="6.500" height="6.500" rx="1.500"/><rect x="16" y="10.500" width="6.500" height="6.500" rx="1.500"/><rect x="16" y="20" width="6.500" height="6.500" rx="1.500"/><path d="M4.750 8v13.500a2 2 0 0 0 2 2H16M4.750 13.750H16"/></svg>
<svg style="left:267px;top:149px" width="26" height="25" viewBox="0 0 26 25" fill="none" stroke="#fff" stroke-width="2.4" stroke-linecap="round" stroke-linejoin="round" ><path d="M13 1.500 1.500 7.200l11.500 5.700L24.500 7.200z"/><path d="M1.500 7.200v5.300l11.500 5.700L24.500 12.500V7.200"/><path d="M1.500 12.500v5.300l11.500 5.700L24.500 17.800v-5.300"/></svg>
<svg style="left:2138px;top:143px" width="26" height="30" viewBox="2138 143 26 30" fill="none" stroke="#fff" stroke-width="0" stroke-linecap="round" stroke-linejoin="round" ><path d="M2146.700 155.500V151.700a4.800 4.800 0 0 1 9.600 0v1" fill="none" stroke="#fff" stroke-width="2.600"/><rect x="2142" y="154.700" width="18.200" height="15.200" rx="1.600" fill="#fff" stroke="none"/><circle cx="2151.100" cy="162.500" r="2" fill="#21468b" stroke="none"/></svg>
<svg style="left:2181px;top:147.5px" width="26" height="25" viewBox="0 0 26 25" fill="none" stroke="#fff" stroke-width="2.2" stroke-linecap="round" stroke-linejoin="round" ><circle cx="10.500" cy="10.500" r="8.500"/><path d="M16.800 16.800l7 6.700"/></svg>
<svg style="left:2223px;top:142.5px" width="28" height="28" viewBox="0 0 28 28" fill="none" stroke="#fff" stroke-width="2" stroke-linecap="round" stroke-linejoin="round" ><circle cx="14" cy="14" r="12.300"/><path d="M10.600 11.300a3.500 3.500 0 1 1 5.200 3c-1.200.7-1.800 1.300-1.800 2.600" stroke-width="1.900"/><circle cx="14" cy="20.300" r=".7" fill="#fff"/></svg>
<svg style="left:2268px;top:147px" width="29" height="25" viewBox="0 0 29 25" fill="none" stroke="#fff" stroke-width="2.3" stroke-linecap="round" stroke-linejoin="round" ><path d="M12.500 15.500a5 5 0 0 0 7.300.5l4.600-4.300a5.100 5.100 0 0 0-7-7.400l-2 1.900"/><path d="M16.500 9.800a5 5 0 0 0-7.300-.5l-4.600 4.300a5.100 5.100 0 0 0 7 7.400l2-1.900"/></svg>
<svg style="left:2310.5px;top:146px" width="24" height="23" viewBox="0 0 24 23" fill="none" stroke="#fff" stroke-width="2.6" stroke-linecap="round" stroke-linejoin="round" ><path d="M20.500 12a9.200 9.200 0 1 1-2.800-7" stroke-width="2.600"/><path d="M14.500 7.500 22 8.500 22.500 1z" fill="#fff" stroke-width="1"/></svg>
<div style="left:2369.2px;top:149.5px;width:3.6px;height:3.6px;background:#fff;border-radius:50%"></div>
<div style="left:2369.2px;top:157.7px;width:3.6px;height:3.6px;background:#fff;border-radius:50%"></div>
<div style="left:2369.2px;top:165.89999999999998px;width:3.6px;height:3.6px;background:#fff;border-radius:50%"></div>
<div style="left:2408.5px;top:157.5px;width:22px;height:2px;background:#fff"></div>
<div style="left:2457.5px;top:150px;width:20px;height:19px;border:2px solid #fff;border-radius:2px"></div>
<svg style="left:2506.5px;top:150.5px" width="18" height="18" viewBox="0 0 18 18" fill="none" stroke="#fff" stroke-width="2.2" stroke-linecap="round" stroke-linejoin="round" ><path d="M1.500 1.500l15 15M16.500 1.500l-15 15"/></svg>
<svg style="left:108px;top:202px" width="25" height="24" viewBox="0 0 25 24" fill="none" stroke="#585d69" stroke-width="2.55" stroke-linecap="round" stroke-linejoin="round" ><path d="M10 3.500H4.500a2 2 0 0 0-2 2V20a2 2 0 0 0 2 2H19a2 2 0 0 0 2-2v-5.500"/><path d="M15 2h7.500v7.500M22 2.500 12.500 12"/></svg>
<svg style="left:139px;top:213px" width="13" height="11" viewBox="0 0 13 11" fill="none" stroke="#585d69" stroke-width="3.3" stroke-linecap="round" stroke-linejoin="round" ><path d="M1.200 1.700 6.50 7.300 11.80 1.700" stroke-linecap="butt" stroke-linejoin="miter"/></svg>
<svg style="left:198px;top:202px" width="24" height="24" viewBox="0 0 24 24" fill="#585d69" stroke="none" stroke-width="0" stroke-linecap="round" stroke-linejoin="round" ><path d="M2 23l1.300-6L15.800 4.500l4.700 4.700L8 21.700zM17.300 3l1.500-1.500a1.600 1.600 0 0 1 2.300 0l2.400 2.400a1.600 1.600 0 0 1 0 2.300L22 7.700z"/></svg>
<svg style="left:228.5px;top:213px" width="13.5" height="11" viewBox="0 0 13.5 11" fill="none" stroke="#585d69" stroke-width="3.3" stroke-linecap="round" stroke-linejoin="round" ><path d="M1.200 1.700 6.75 7.300 12.30 1.700" stroke-linecap="butt" stroke-linejoin="miter"/></svg>
<svg style="left:291.5px;top:200.5px" width="24" height="25" viewBox="0 0 24 25" fill="none" stroke="#585d69" stroke-width="2.35" stroke-linecap="round" stroke-linejoin="round" ><rect x="2" y="4.500" width="20" height="19" rx="2"/><rect x="8" y="1.500" width="8" height="5.500" rx="1.500" fill="#fff"/><path d="M7.500 14.500l3.200 3.300 6-6.300"/></svg>
<svg style="left:321px;top:213px" width="13.5" height="11" viewBox="0 0 13.5 11" fill="none" stroke="#585d69" stroke-width="3.3" stroke-linecap="round" stroke-linejoin="round" ><path d="M1.200 1.700 6.75 7.300 12.30 1.700" stroke-linecap="butt" stroke-linejoin="miter"/></svg>
<svg style="left:385px;top:200px" width="21" height="27" viewBox="0 0 21 27" fill="none" stroke="#585d69" stroke-width="2.45" stroke-linecap="round" stroke-linejoin="round" ><rect x="1.500" y="11" width="18" height="14.500" rx="2"/><path d="M5.500 11V7a5 5 0 0 1 10 0v4"/><circle cx="10.500" cy="18.200" r="1.700" fill="#585d69" stroke="none"/></svg>
<svg style="left:413px;top:213px" width="14" height="11" viewBox="0 0 14 11" fill="none" stroke="#585d69" stroke-width="3.3" stroke-linecap="round" stroke-linejoin="round" ><path d="M1.200 1.700 7.00 7.300 12.80 1.700" stroke-linecap="butt" stroke-linejoin="miter"/></svg>
<svg style="left:474px;top:201px" width="28" height="28" viewBox="0 0 28 28" fill="none" stroke="#62666d" stroke-width="2.0" stroke-linecap="round" stroke-linejoin="round" ><ellipse cx="11" cy="5" rx="9" ry="3.500"/><path d="M2 5v15c0 1.900 3.500 3.400 8 3.500M20 5v6"/><circle cx="20.500" cy="20.500" r="3.200" stroke-width="1.700"/><path d="M20.500 14.800v2M20.500 24.200v2M14.800 20.500h2M24.200 20.500h2M16.500 16.500l1.400 1.400M23.100 23.100l1.400 1.400M16.500 24.500l1.400-1.400M23.100 17.900l1.400-1.400" stroke-width="1.700"/></svg>
<svg style="left:503.5px;top:213px" width="13.5" height="11" viewBox="0 0 13.5 11" fill="none" stroke="#585d69" stroke-width="3.3" stroke-linecap="round" stroke-linejoin="round" ><path d="M1.200 1.700 6.75 7.300 12.30 1.700" stroke-linecap="butt" stroke-linejoin="miter"/></svg>
<svg style="left:570px;top:198px" width="32" height="32" viewBox="570 198 32 32" fill="none" stroke="#585d69" stroke-width="2.1" stroke-linecap="round" stroke-linejoin="round" ><path d="M580 219.500V203.600M575 208.600l5-5 5 5M592.400 208v16.900M587.400 219.900l5 5 5-5"/></svg>
<svg style="left:603.5px;top:213px" width="13.5" height="11" viewBox="0 0 13.5 11" fill="none" stroke="#585d69" stroke-width="3.3" stroke-linecap="round" stroke-linejoin="round" ><path d="M1.200 1.700 6.75 7.300 12.30 1.700" stroke-linecap="butt" stroke-linejoin="miter"/></svg>
<svg style="left:689px;top:202.5px" width="23" height="22" viewBox="0 0 23 22" fill="none" stroke="#585d69" stroke-width="2.45" stroke-linecap="round" stroke-linejoin="round" ><path d="M8.500 20v-5c0-3.200-1.600-5-6-9.500M2 11V5h6M13.500 10.500C14.500 8.500 16 7 20 3M14.500 2.500h6.500V9"/></svg>
<svg style="left:717.5px;top:213px" width="13.0" height="11" viewBox="0 0 13.0 11" fill="none" stroke="#585d69" stroke-width="3.3" stroke-linecap="round" stroke-linejoin="round" ><path d="M1.200 1.700 6.50 7.300 11.80 1.700" stroke-linecap="butt" stroke-linejoin="miter"/></svg>
<svg style="left:790px;top:201px" width="27" height="27" viewBox="0 0 27 27" fill="none" stroke="#585d69" stroke-width="2.35" stroke-linecap="round" stroke-linejoin="round" ><circle cx="13.500" cy="13.500" r="11.500"/><path d="M13.500 7.500v12M7.500 13.500h12"/></svg>
<svg style="left:821px;top:213px" width="13.5" height="11" viewBox="0 0 13.5 11" fill="none" stroke="#585d69" stroke-width="3.3" stroke-linecap="round" stroke-linejoin="round" ><path d="M1.200 1.700 6.75 7.300 12.30 1.700" stroke-linecap="butt" stroke-linejoin="miter"/></svg>
<svg style="left:882.5px;top:201px" width="24" height="24" viewBox="0 0 24 24" fill="none" stroke="#585d69" stroke-width="2.35" stroke-linecap="round" stroke-linejoin="round" ><path d="M10.500 3.500H4a1.500 1.500 0 0 0-1.500 1.500v17l7.500-4.500 7.500 4.500v-9.500"/><path d="M18.500 1.500v6M15.500 4.500h6"/></svg>
<svg style="left:912px;top:213px" width="13" height="11" viewBox="0 0 13 11" fill="none" stroke="#585d69" stroke-width="3.3" stroke-linecap="round" stroke-linejoin="round" ><path d="M1.200 1.700 6.50 7.300 11.80 1.700" stroke-linecap="butt" stroke-linejoin="miter"/></svg>
<svg style="left:979px;top:200px" width="29" height="28" viewBox="0 0 29 28" fill="none" stroke="#585d69" stroke-width="2.35" stroke-linecap="round" stroke-linejoin="round" ><circle cx="14.500" cy="5.500" r="3.700"/><circle cx="5.500" cy="22" r="3.700"/><circle cx="23.500" cy="22" r="3.700"/><path d="M14.500 9.200v4.300M5.500 18.300c0-3.200 2-4.800 4.500-4.800h9c2.500 0 4.500 1.600 4.500 4.800"/></svg>
<svg style="left:1011px;top:213px" width="13.5" height="11" viewBox="0 0 13.5 11" fill="none" stroke="#585d69" stroke-width="3.3" stroke-linecap="round" stroke-linejoin="round" ><path d="M1.200 1.700 6.75 7.300 12.30 1.700" stroke-linecap="butt" stroke-linejoin="miter"/></svg>
<svg style="left:1086px;top:198px" width="26" height="30" viewBox="1086 198 26 30" fill="none" stroke="#585d69" stroke-width="2.8" stroke-linecap="round" stroke-linejoin="round" ><path d="M1104.500 203v1.500"/><circle cx="1104.500" cy="207.700" r="2.100" stroke-width="2.200"/><path d="M1104.500 210.200v7.700a6.200 6.200 0 0 1-12.400 0v-4.300l3.800 2.600"/></svg>
<svg style="left:1117.5px;top:213px" width="13.5" height="11" viewBox="0 0 13.5 11" fill="none" stroke="#585d69" stroke-width="3.3" stroke-linecap="round" stroke-linejoin="round" ><path d="M1.200 1.700 6.75 7.300 12.30 1.700" stroke-linecap="butt" stroke-linejoin="miter"/></svg>
<svg style="left:1194px;top:200px" width="29" height="29" viewBox="1194 200 29 29" fill="none" stroke="#585d69" stroke-width="2.3" stroke-linecap="round" stroke-linejoin="round" ><circle cx="1208.400" cy="214.300" r="11.300"/><path d="M1209.500 209C1203 209.500 1201.500 216 1205.300 219.300M1207.300 219.600C1213.800 219.100 1215.300 212.600 1211.500 209.300" stroke-width="2"/><path d="M1207.500 206l2.500 3-3.300 1.500M1209.300 222.600l-2.500-3 3.300-1.500" stroke-width="1.800"/></svg>
<svg style="left:1226px;top:213px" width="13" height="11" viewBox="0 0 13 11" fill="none" stroke="#585d69" stroke-width="3.3" stroke-linecap="round" stroke-linejoin="round" ><path d="M1.200 1.700 6.50 7.300 11.80 1.700" stroke-linecap="butt" stroke-linejoin="miter"/></svg>
<svg style="left:1298px;top:199px" width="32" height="31" viewBox="1298 199 32 31" fill="none" stroke="#585d69" stroke-width="2.3" stroke-linecap="round" stroke-linejoin="round" ><path d="M1319 209.900H1303a1.500 1.500 0 0 0-1.500 1.500v8.400a1.500 1.500 0 0 0 1.500 1.500h16"/><rect x="1305.700" y="213.400" width="12.500" height="4.400" fill="#585d69" stroke="none"/><path d="M1319 203.300v22M1314.500 203.300h9M1314.500 225.300h9" stroke-width="2.100"/><path d="M1325.500 210.300c1 3.500 1 7.200 0 10.700" stroke-width="1.900"/></svg>
<svg style="left:1331px;top:213px" width="13.5" height="11" viewBox="0 0 13.5 11" fill="none" stroke="#585d69" stroke-width="3.3" stroke-linecap="round" stroke-linejoin="round" ><path d="M1.200 1.700 6.75 7.300 12.30 1.700" stroke-linecap="butt" stroke-linejoin="miter"/></svg>
<svg style="left:1401.5px;top:200px" width="27" height="28" viewBox="0 0 27 28" fill="none" stroke="#585d69" stroke-width="2.25" stroke-linecap="round" stroke-linejoin="round" ><circle cx="20.500" cy="5.500" r="3.800"/><circle cx="6" cy="14" r="3.800"/><circle cx="20.500" cy="22.500" r="3.800"/><path d="M9.300 12.100l7.900-4.700M9.300 15.900l7.900 4.700"/></svg>
<svg style="left:1433px;top:213px" width="13.5" height="11" viewBox="0 0 13.5 11" fill="none" stroke="#585d69" stroke-width="3.3" stroke-linecap="round" stroke-linejoin="round" ><path d="M1.200 1.700 6.75 7.300 12.30 1.700" stroke-linecap="butt" stroke-linejoin="miter"/></svg>
<svg style="left:1521.5px;top:200px" width="26" height="29" viewBox="0 0 26 29" fill="none" stroke="#585d69" stroke-width="2.3" stroke-linecap="round" stroke-linejoin="round" ><rect x="1.500" y="1.500" width="10" height="5.500" rx="2.500"/><rect x="13.500" y="11.500" width="10" height="5.500" rx="2.500"/><rect x="13.500" y="21.500" width="10" height="5.500" rx="2.500"/><path d="M6.500 7v2.500h12v2M18.500 17v4.500"/></svg>
<svg style="left:2051.5px;top:199.5px" width="26" height="25" viewBox="0 0 27 26" fill="none" stroke="#33373d" stroke-width="1.7" stroke-linecap="round" stroke-linejoin="round" ><circle cx="8" cy="7.500" r="5.700"/><circle cx="22" cy="5" r="2.600"/><circle cx="18.500" cy="16" r="2.600"/><circle cx="6.500" cy="22" r="2.600"/><path d="M13.500 6.600l5.900-1M12.500 11l3.800 3.300M7.500 13.300l-.7 6.100"/></svg>
<svg style="left:2135.5px;top:199.5px" width="24" height="24" viewBox="0 0 24 24" fill="none" stroke="#a9acb0" stroke-width="1.8" stroke-linecap="round" stroke-linejoin="round" ><circle cx="12" cy="12" r="10.500"/><path d="M12 6v12M6 12h12"/></svg>
<svg style="left:2211px;top:202.5px" width="20.5" height="17.5" viewBox="0 0 23 19" fill="none" stroke="#33373d" stroke-width="1.6" stroke-linecap="round" stroke-linejoin="round" ><rect x="1" y="1" width="21" height="17" rx="1"/><rect x="4.500" y="5" width="5" height="4" fill="#33373d" stroke-width="1"/><path d="M12.500 6h6M12.500 9.500h6M4.500 13.500h14"/></svg>
<svg style="left:2290px;top:197px" width="28" height="26" viewBox="0 0 28 26" fill="none" stroke="#33373d" stroke-width="1.6" stroke-linecap="round" stroke-linejoin="round" ><circle cx="14" cy="3.500" r="2.200"/><circle cx="3.500" cy="22" r="2.200"/><circle cx="10.500" cy="22" r="2.200"/><circle cx="17.500" cy="22" r="2.200"/><circle cx="24.500" cy="22" r="2.200"/><circle cx="7" cy="13" r="2"/><circle cx="21" cy="13" r="2"/><path d="M14 5.700v3.500M7 11V9.200h14V11M3.500 19.800V17.500h7v2.300M7 15v2.500M17.500 19.800V17.500h7v2.300M21 15v2.500"/></svg>
<svg style="left:2369.5px;top:199.5px" width="20" height="23" viewBox="0 0 20 23" fill="none" stroke="#33373d" stroke-width="1.9" stroke-linecap="round" stroke-linejoin="round" ><path d="M6 9H2.500a1 1 0 0 0-1 1v11a1 1 0 0 0 1 1h15a1 1 0 0 0 1-1V10a1 1 0 0 0-1-1H14"/><path d="M10 15V1.500M5.500 6 10 1.500 14.500 6"/></svg>
<svg style="left:2458px;top:198px" width="30" height="30" viewBox="2458 198 30 30" fill="none" stroke="#33373d" stroke-width="1.5" stroke-linecap="round" stroke-linejoin="round" ><path d="M2480.500 210.500V204.500a1.500 1.500 0 0 0-1.500-1.500H2465a1.500 1.500 0 0 0-1.500 1.500v13.500a1.500 1.500 0 0 0 1.500 1.500h6.500M2463.500 208.700h17M2463.500 214.200h9M2469.200 203v16.500M2474.900 203v8"/><path d="M2478.30 212.60L2480.05 214.87L2482.89 215.25L2481.80 217.90L2482.89 220.55L2480.05 220.93L2478.30 223.20L2476.55 220.93L2473.71 220.55L2474.80 217.90L2473.71 215.25L2476.55 214.87z" fill="#2b2f36" stroke="#2b2f36" stroke-width="1" stroke-linejoin="round"/><circle cx="2478.3" cy="217.9" r="1.600" fill="#fff" stroke="none"/></svg>
<div style="left:2489px;top:300.5px;width:43.5px;height:43px;border:1px solid #8f93a3;border-radius:4px;background:#fff"></div>
<svg style="left:2497px;top:308.5px" width="28" height="28" viewBox="0 0 28 28" fill="none" stroke="#7a5cc2" stroke-width="1.6" stroke-linecap="round" stroke-linejoin="round" ><circle cx="14" cy="14" r="12.200"/><path d="M14 12.500v7.500"/><circle cx="14" cy="8.300" r=".9" fill="#7a5cc2"/></svg>
<div style="left:2489px;top:364px;width:43.5px;height:43px;border:1px solid #5aa87d;border-radius:4px;background:#fff"></div>
<svg style="left:2496px;top:371px" width="30" height="30" viewBox="0 0 24 24" fill="none" stroke="#4aa472" stroke-width="1.3" stroke-linecap="round" stroke-linejoin="round" ><path d="M10 7H7a5 5 0 0 0 0 10h3M14 7h3a5 5 0 0 1 0 10h-3M8 12h8"/></svg>
<div style="left:2489px;top:427.5px;width:43.5px;height:43px;border:1px solid #3c6cb4;border-radius:4px;background:#fff"></div>
<svg style="left:2494.5px;top:433px" width="32" height="32" viewBox="0 0 32 32" fill="none" stroke="#2f6db6" stroke-width="1.7" stroke-linecap="round" stroke-linejoin="round" ><path d="M7.500 22.500A11 11 0 0 1 9 7M2.500 10 9 7l2.500 6.500"/><path d="M13 4.200a11 11 0 0 1 13.500 6.300M20.500 11.800l6.200-1.200 .600-6.400"/><path d="M27 15.500a11 11 0 0 1-12.500 12M20.500 24l-6.200 3.500 4.200 5"/></svg>
<div style="left:2489px;top:491px;width:43.5px;height:43px;border:1px solid #2e9e5b;border-radius:4px;background:#fff"></div>
<svg style="left:2495.5px;top:497px" width="31" height="31" viewBox="0 0 24 24" fill="none" stroke="#1f9c55" stroke-width="2.3" stroke-linecap="round" stroke-linejoin="round" ><path d="M10 7H7a5 5 0 0 0 0 10h3M14 7h3a5 5 0 0 1 0 10h-3M8 12h8"/></svg>
<div style="left:2489px;top:554px;width:43.5px;height:43px;border:1px solid #8b8b8b;border-radius:4px;background:#fff"></div>
<svg style="left:2496.5px;top:562px" width="28" height="28" viewBox="0 0 28 28" fill="none" stroke="#5c5f63" stroke-width="1.8" stroke-linecap="round" stroke-linejoin="round" ><path d="M3.500 9.500A11.500 11.500 0 1 1 2.500 14"/><path d="M3 3.500v6.500h6.500M14 8v6.500l4.500 3.500"/></svg>
<div style="left:2489px;top:618px;width:43.5px;height:43px;border:1px solid #2e9a8a;border-radius:4px;background:#fff"></div>
<svg style="left:2496px;top:625px" width="30" height="28" viewBox="0 0 30 28" fill="none" stroke="#2a9382" stroke-width="1.9" stroke-linecap="round" stroke-linejoin="round" ><circle cx="15" cy="10" r="3.600"/><path d="M8.500 26.500v-5.500a4 4 0 0 1 4-4h5a4 4 0 0 1 4 4v5.500z"/><path d="M7.500 3A3.300 3.300 0 0 0 7.500 9.500M2 19.500v-3.500a3.700 3.700 0 0 1 3.700-3.700H7M22.500 3a3.300 3.300 0 0 1 0 6.500M28 19.500v-3.500a3.700 3.700 0 0 0-3.700-3.700H23"/></svg>
<div style="left:21.5px;top:149px;width:27.5px;height:26.5px;background:#ee5261;border-radius:5px"></div>
<svg style="left:28.25px;top:155.25px" width="14" height="14" viewBox="0 0 14 14" fill="none" stroke="#fff" stroke-width="1.8" stroke-linecap="round" stroke-linejoin="round" ><path d="M7 1v12M1 7h12"/></svg>
<div style="left:13px;top:202px;width:44.5px;height:45px;border:1px solid #e6e6ec;border-radius:9px;background:#fff"></div>
<svg style="left:20.25px;top:209.2px" width="30" height="30" viewBox="0 0 30 30" fill="none" stroke="#1b3769" stroke-width="2.1" stroke-linecap="round" stroke-linejoin="round" ><rect x="2.300" y="5.500" width="25" height="19.300" rx="2.500"/><path d="M17.500 6h9.500v5.500H17.500z" fill="#1b3769" stroke-width="1.5"/></svg>
<div style="left:13px;top:263.5px;width:44.5px;height:45px;border:1px solid #e6e6ec;border-radius:9px;background:#fff"></div>
<svg style="left:19.75px;top:269.8px" width="31" height="31" viewBox="0 0 30 31" fill="none" stroke="#1b3769" stroke-width="2.5" stroke-linecap="round" stroke-linejoin="round" ><path d="M2 2.500h26c1 0 1.500 1.100.800 1.900L19 16v11.500c0 .8-.6 1.500-1.500 1.500h-5c-.8 0-1.500-.7-1.500-1.500V16L1.200 4.400C.5 3.600 1 2.500 2 2.500z"/></svg>
<div style="left:13px;top:325px;width:44.5px;height:45px;border:1px solid #e6e6ec;border-radius:9px;background:#fff"></div>
<svg style="left:20.25px;top:332.2px" width="30" height="30" viewBox="0 0 30 30" fill="none" stroke="#1b3769" stroke-width="3" stroke-linecap="round" stroke-linejoin="round" ><path d="M9.500 9h18.500M9.500 15h18.500M9.500 21h18.500" stroke-width="2.900"/><path d="M2.800 9h.1M2.800 15h.1M2.800 21h.1" stroke-width="3"/></svg>
<div style="left:13px;top:386.5px;width:44.5px;height:45px;border:1px solid #e6e6ec;border-radius:9px;background:#fff"></div>
<svg style="left:20.25px;top:394.5px" width="30" height="30" viewBox="0 0 30 30" fill="none" stroke="#1b2d5a" stroke-width="2.1" stroke-linecap="round" stroke-linejoin="round" ><rect x="5" y="5" width="20.500" height="23" rx="2.500"/><rect x="10" y="2.300" width="10.500" height="4.700" rx="2.300" fill="#fff"/><path d="M9.500 12.500h9M9.500 16.200h11.500M9.500 19.900h6M9.500 23.600h10" stroke-width="1.800"/></svg>
<div style="left:13px;top:452px;width:44.5px;height:45px;border:1px solid #eeeaf5;border-radius:9px;background:#fff"></div>
<svg style="left:20.25px;top:459.5px" width="30" height="30" viewBox="0 0 30 30" fill="none" stroke="#8a5fc9" stroke-width="2" stroke-linecap="round" stroke-linejoin="round" ><rect x="1.500" y="2" width="27" height="26" rx="3.500"/><path d="M2 7h26" stroke-width="1.400"/><circle cx="8" cy="13" r="2.200"/><circle cx="8" cy="21" r="2.200"/><path d="M13.500 13H24M13.500 21H24"/></svg>
<div style="left:13px;top:513.5px;width:44.5px;height:45px;border:1px solid #e8eef2;border-radius:9px;background:#fff"></div>
<svg style="left:19.75px;top:520.5px" width="31" height="30" viewBox="0 0 30 30" fill="none" stroke="#27769f" stroke-width="2.3" stroke-linecap="round" stroke-linejoin="round" ><rect x="1.500" y="2" width="28" height="26" rx="5"/><path d="M1.500 10.500h28M1.500 19.500h28M11 10.500v17.500M20.500 10.500v17.500"/></svg>
<div style="left:13px;top:575px;width:44.5px;height:45px;border:1px solid #f5f0e4;border-radius:9px;background:#fff"></div>
<svg style="left:20.25px;top:583.0px" width="30" height="31" viewBox="0 0 30 31" fill="none" stroke="#d6aa4c" stroke-width="1.7" stroke-linecap="round" stroke-linejoin="round" ><g transform="translate(1.500 0)"><rect x="3.500" y="1.500" width="6" height="6" rx="1"/><rect x="19.500" y="11" width="6.500" height="6" rx="1"/><rect x="19.500" y="23" width="6.500" height="6" rx="1"/><path d="M6.500 7.500v16a2.500 2.500 0 0 0 2.500 2.500h10.500M6.500 14H19.500"/></g></svg>
<div style="left:13px;top:637px;width:44.5px;height:45px;border:1px solid #f5ebe4;border-radius:9px;background:#fff"></div>
<svg style="left:20.25px;top:645.0px" width="30" height="30" viewBox="0 0 30 30" fill="none" stroke="#cf7d43" stroke-width="1.7" stroke-linecap="round" stroke-linejoin="round" ><rect x="1.500" y="3" width="8.500" height="24" rx="1"/><rect x="10" y="3" width="8.500" height="12"/><rect x="18.500" y="3" width="9" height="19.500" rx="1"/><path d="M1.500 14.500H10M18.500 11.500h9"/></svg>
<div style="left:13px;top:699px;width:44.5px;height:45px;border:1px solid #f3e9ee;border-radius:9px;background:#fff"></div>
<svg style="left:20.25px;top:705.5px" width="30" height="30" viewBox="0 0 30 30" fill="none" stroke="#c45c84" stroke-width="1.6" stroke-linecap="round" stroke-linejoin="round" ><path d="M15.500 27.500V17M15.500 17C15.500 12 23.700 11 23.700 4.300M20.300 7.700l3.400-3.400 3.400 3.400M4 7.700l3.400-3.400 3.400 3.400"/><path d="M15.500 17C15.500 12 7.400 11 7.400 4.300" stroke-dasharray="2.500 2.200"/></svg>
<div style="left:13px;top:761px;width:44.5px;height:45px;border:1px solid #e6eef2;border-radius:9px;background:#fff"></div>
<svg style="left:20.25px;top:768.5px" width="30" height="30" viewBox="0 0 30 30" fill="none" stroke="#2a7998" stroke-width="2" stroke-linecap="round" stroke-linejoin="round" ><rect x="3" y="1.500" width="7" height="7" rx="1.500"/><rect x="20" y="20" width="7" height="7" rx="1.500"/><path d="M6.500 8.500V19M6.500 19l4.500 4.500-4.500 4.500L2 23.500zM11 23.500h9"/></svg>
<div style="left:13px;top:822px;width:44.5px;height:45px;border:1px solid #f6ece2;border-radius:9px;background:#fff"></div>
<svg style="left:20.25px;top:829.0px" width="30" height="30" viewBox="0 0 30 30" fill="none" stroke="#d9782d" stroke-width="1.8" stroke-linecap="round" stroke-linejoin="round" ><rect x="3" y="3" width="24" height="24" rx="2"/><path d="M3 5h24" stroke-width="3.500"/><path d="M8.500 16.500s2.500-4 6.500-4 6.500 4 6.500 4-2.500 4-6.500 4-6.500-4-6.500-4z" stroke-width="1.400"/><circle cx="15" cy="16.500" r="1.500" stroke-width="1.400"/></svg>
<div style="left:13px;top:884px;width:44.5px;height:45px;border:1px solid #e6eff5;border-radius:9px;background:#fff"></div>
<svg style="left:20.25px;top:890.5px" width="30" height="30" viewBox="0 0 30 30" fill="none" stroke="#3a90c6" stroke-width="1.7" stroke-linecap="round" stroke-linejoin="round" ><path d="M1.500 19.500h13M9.500 14.500l5 5-5 5M29 11H16M21 6l-5 5 5 5"/></svg>
<div style="left:13px;top:945.5px;width:44.5px;height:45px;border:1px solid #ede8f5;border-radius:9px;background:#fff"></div>
<svg style="left:20.25px;top:952.5px" width="30" height="30" viewBox="0 0 30 30" fill="none" stroke="#8a5fc9" stroke-width="1.9" stroke-linecap="round" stroke-linejoin="round" ><rect x="2" y="2" width="26" height="26" rx="4"/><path d="M7.500 9.500h8M11 15h9M15.500 20.500h8"/></svg>
<div style="left:13px;top:1007px;width:44.5px;height:45px;border:1px solid #ececec;border-radius:9px;background:#fff"></div>
<svg style="left:20.25px;top:1014.0px" width="30" height="30" viewBox="0 0 30 30" fill="none" stroke="#55585c" stroke-width="1.9" stroke-linecap="round" stroke-linejoin="round" ><path d="M4 10A12 12 0 1 1 3 15"/><path d="M3.500 3.500V10H10M15 8.500v7l4.500 4.500"/></svg>
<div style="left:13px;top:1068.5px;width:44.5px;height:45px;border:1px solid #e4efef;border-radius:9px;background:#fff"></div>
<svg style="left:20.25px;top:1076.0px" width="30" height="30" viewBox="0 0 30 30" fill="none" stroke="#2b8a8c" stroke-width="1.7" stroke-linecap="round" stroke-linejoin="round" ><rect x="3" y="3" width="24" height="24" rx="2"/><path d="M9.500 20.500v-6M15 20.500v-11M20.500 20.500v-3"/></svg>
<div style="left:13px;top:1129.5px;width:44.5px;height:45px;border:1px solid #ebe7f5;border-radius:9px;background:#fff"></div>
<svg style="left:20.25px;top:1137.5px" width="30" height="30" viewBox="0 0 30 30" fill="none" stroke="#7c5fc8" stroke-width="1.8" stroke-linecap="round" stroke-linejoin="round" ><path d="M3 24.500a13 13 0 1 1 24 0"/><path d="M13 21.500 21.500 11l-5 12.500z" fill="#7c5fc8" stroke-width="1"/><path d="M3 24.500h24" stroke-width="1.500"/></svg>
<div style="left:13px;top:1191.5px;width:44.5px;height:45px;border:1px solid #e6eef5;border-radius:9px;background:#fff"></div>
<div style="left:38px;top:1194.5px;width:10px;height:10px;background:#2a8fd0;border-radius:50%"></div>
<div style="left:0px;top:1198px;width:71px;height:17px;background:#fff"></div>
<div style="left:1693px;top:314.5px;width:269.5px;height:650.5px;background:#fff;border-radius:12px;box-shadow:0 7.5px 7.5px -4.5px rgba(0,0,0,.2),0 12px 15px 1.5px rgba(0,0,0,.14),0 4.5px 21px 3px rgba(0,0,0,.12)"></div>
<span class="t" style="left:1734.00px;top:330.9px;font-size:21.5px;line-height:21.5px;color:#535353;letter-spacing:0.820px;">Filter</span>
<span class="t" style="left:1736.00px;top:380.9px;font-size:21.5px;line-height:21.5px;color:#535353;letter-spacing:0.714px;">Advanced Filter</span>
<span class="t" style="left:1736.00px;top:430.9px;font-size:21.5px;line-height:21.5px;color:#535353;letter-spacing:1.083px;">Add Attribute</span>
<span class="t" style="left:1734.00px;top:480.9px;font-size:21.5px;line-height:21.5px;color:#535353;letter-spacing:0.658px;">Freeze Column</span>
<span class="t" style="left:1734.00px;top:530.9px;font-size:21.5px;line-height:21.5px;color:#535353;letter-spacing:0.850px;">Unfreeze Column</span>
<span class="t" style="left:1734.00px;top:580.9px;font-size:21.5px;line-height:21.5px;color:#535353;letter-spacing:0.890px;">Hide Column</span>
<span class="t" style="left:1735.00px;top:630.9px;font-size:21.5px;line-height:21.5px;color:#535353;letter-spacing:1.075px;">Sort by A - Z</span>
<span class="t" style="left:1735.00px;top:680.9px;font-size:21.5px;line-height:21.5px;color:#535353;letter-spacing:0.908px;">Sort by Z - A</span>
<span class="t" style="left:1735.00px;top:730.9px;font-size:21.5px;line-height:21.5px;color:#535353;letter-spacing:0.833px;">Clear Sorting</span>
<span class="t" style="left:1734.00px;top:780.9px;font-size:21.5px;line-height:21.5px;color:#535353;letter-spacing:0.800px;">Pin to left</span>
<span class="t" style="left:1734.00px;top:830.9px;font-size:21.5px;line-height:21.5px;color:#535353;letter-spacing:0.818px;">Pin to right</span>
<span class="t" style="left:1734.00px;top:880.9px;font-size:21.5px;line-height:21.5px;color:#535353;letter-spacing:1.000px;">Mass Update</span>
<span class="t" style="left:1735.00px;top:930.9px;font-size:21.5px;line-height:21.5px;color:#535353;letter-spacing:0.429px;">Group By</span>
<svg style="left:1704.5px;top:328.6px" width="24" height="24" viewBox="0 0 24 24" fill="none" stroke="#474747" stroke-width="1.9" stroke-linecap="round" stroke-linejoin="round" ><path d="M3 6h18M6.5 12h11M10 18h4"/></svg>
<svg style="left:1704.5px;top:378.6px" width="24" height="24" viewBox="0 0 24 24" fill="none" stroke="#474747" stroke-width="1.9" stroke-linecap="round" stroke-linejoin="round" ><path d="M3 6h18M6.5 12h11M10 18h4"/></svg>
<svg style="left:1704.5px;top:428.6px" width="24" height="24" viewBox="0 0 24 24" fill="none" stroke="#474747" stroke-width="1.8" stroke-linecap="round" stroke-linejoin="round" ><rect x="2.500" y="2.500" width="9.500" height="20" rx="1.5"/><path d="M8.500 7.500H12M8.500 12.500H12M8.500 17.500H12M18 2.500v6M15 5.500h6"/></svg>
<svg style="left:1704.5px;top:478.6px" width="24" height="24" viewBox="0 0 24 24" fill="none" stroke="#474747" stroke-width="1.8" stroke-linecap="round" stroke-linejoin="round" ><rect x="3" y="10.5" width="18" height="11" rx="2"/><path d="M7 10.5V7.500a5 5 0 0 1 10 0v3"/></svg>
<svg style="left:1704.5px;top:528.6px" width="24" height="24" viewBox="0 0 24 24" fill="none" stroke="#474747" stroke-width="1.8" stroke-linecap="round" stroke-linejoin="round" ><rect x="3" y="10.5" width="18" height="11" rx="2"/><path d="M7 10.5V7.500a5 5 0 0 1 9.500-2.200"/></svg>
<svg style="left:1704.5px;top:578.6px" width="24" height="24" viewBox="0 0 24 24" fill="none" stroke="#474747" stroke-width="1.7" stroke-linecap="round" stroke-linejoin="round" ><path d="M2 12s3.6-6.5 10-6.5S22 12 22 12"/><path d="M2 12s3 5.5 8.5 6.3"/><circle cx="12" cy="12" r="2.6"/><path d="M18.5 14v6.5M15.8 18l2.7 2.7 2.7-2.7"/></svg>
<svg style="left:1704.5px;top:628.6px" width="24" height="24" viewBox="0 0 24 24" fill="none" stroke="#474747" stroke-width="1.9" stroke-linecap="round" stroke-linejoin="round" ><path d="M6 3v17M2.5 16.5 6 20l3.5-3.5"/><path d="M14 11V6.2a2.5 2.5 0 0 1 5 0V11M14 8h5M14 14h5l-5 7h5"/></svg>
<svg style="left:1704.5px;top:678.6px" width="24" height="24" viewBox="0 0 24 24" fill="none" stroke="#474747" stroke-width="1.9" stroke-linecap="round" stroke-linejoin="round" ><path d="M6 21V4M2.5 7.5 6 4l3.5 3.5"/><path d="M14 21v-4.8a2.5 2.5 0 0 1 5 0V21M14 18h5M14 3h5l-5 7h5"/></svg>
<svg style="left:1704.5px;top:728.6px" width="24" height="24" viewBox="0 0 24 24" fill="none" stroke="#474747" stroke-width="1.8" stroke-linecap="round" stroke-linejoin="round" ><path d="M13.500 2.500 22 11 12 21H7.500L2 15.500a1.500 1.500 0 0 1 0-2z"/><path d="M7.500 8.500l8.500 8.500M12 21h10"/></svg>
<svg style="left:1698px;top:770.0px" width="40" height="40" viewBox="0 0 40 40" fill="none" stroke="#474747" stroke-width="1.5" stroke-linecap="round" stroke-linejoin="round" ><path d="M6.300 32.900 14.500 25"/><path d="M9.200 17.800 21.400 30.300C21.800 26.500 21.500 24.500 20.400 23L17.100 19.100C15 17.800 12.500 17.500 9.200 17.800z"/><path d="M17.100 19.100 21.050 14.500M20.400 23 25 18.400"/><path d="M20.700 8.900 30.300 18.400C28 18.900 26.500 18.900 25 18.400 23.500 17.500 21.800 16 21.050 14.500 20.500 13 20.400 11 20.700 8.900z"/></svg>
<svg style="left:1698px;top:820.0px" width="40" height="40" viewBox="0 0 40 40" fill="none" stroke="#474747" stroke-width="1.5" stroke-linecap="round" stroke-linejoin="round" ><path d="M6.300 32.900 14.500 25"/><path d="M9.200 17.800 21.400 30.300C21.800 26.500 21.500 24.500 20.400 23L17.100 19.100C15 17.800 12.500 17.500 9.200 17.800z"/><path d="M17.100 19.100 21.050 14.500M20.400 23 25 18.400"/><path d="M20.700 8.900 30.300 18.400C28 18.900 26.500 18.900 25 18.400 23.500 17.500 21.800 16 21.050 14.500 20.500 13 20.400 11 20.700 8.900z"/></svg>
<svg style="left:1704.5px;top:878.6px" width="24" height="24" viewBox="0 0 24 24" fill="none" stroke="#474747" stroke-width="2.0" stroke-linecap="round" stroke-linejoin="round" ><ellipse cx="12" cy="5" rx="9.500" ry="3"/><path d="M2.500 5v4.700c0 1.700 4.200 3 9.500 3s9.500-1.300 9.500-3V5M2.500 9.700v4.700c0 1.700 4.200 3 9.500 3s9.500-1.300 9.500-3V9.700M2.500 14.400v4.700c0 1.700 4.200 3 9.500 3s9.500-1.300 9.500-3v-4.700"/></svg>
<svg style="left:1704.5px;top:928.6px" width="24" height="24" viewBox="0 0 24 24" fill="none" stroke="#474747" stroke-width="1.5" stroke-linecap="round" stroke-linejoin="round" ><path d="M8.500 5H22M8.500 9.500H22M8.500 15.500H22M8.500 20H22M5.500 3.500H3.500v7.500h2M5.500 14H3.500v7.500h2"/></svg>
</body></html>
